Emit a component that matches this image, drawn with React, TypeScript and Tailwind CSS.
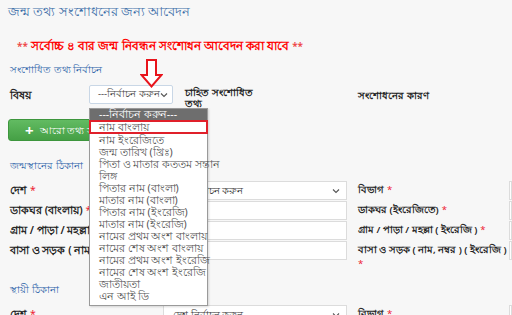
import React from "react";

const items = [
  "নাম বাংলায়",
  "নাম ইংরেজিতে",
  "জন্ম তারিখ (খ্রিঃ)",
  "পিতা ও মাতার কততম সন্তান",
  "লিঙ্গ",
  "পিতার নাম (বাংলা)",
  "মাতার নাম (বাংলা)",
  "পিতার নাম (ইংরেজি)",
  "মাতার নাম (ইংরেজি)",
  "নামের প্রথম অংশ বাংলায়",
  "নামের শেষ অংশ বাংলায়",
  "নামের প্রথম অংশ ইংরেজি",
  "নামের শেষ অংশ ইংরেজি",
  "জাতীয়তা",
  "এন আই ডি",
];

function Chevron() {
  return (
    <svg width="8" height="6" viewBox="0 0 8 6" className="shrink-0">
      <path d="M1 1.5 L4 4.5 L7 1.5" fill="none" stroke="#555" strokeWidth="1.1" />
    </svg>
  );
}

function Star() {
  return <span className="text-[#e23] ml-[3px] font-normal">*</span>;
}

function Row({
  left,
  right,
  leftInput,
}: {
  left: React.ReactNode;
  right: React.ReactNode;
  leftInput?: React.ReactNode;
}) {
  return (
    <div className="flex items-start h-[20px]">
      <div className="w-[163px] shrink-0 pl-[10px] pt-[2px] text-[10.5px] font-semibold text-[#222] leading-[14px] whitespace-nowrap">
        {left}
      </div>
      <div className="w-[184px] shrink-0 h-[19px] bg-white border border-[#dcdcdc] flex items-center pl-[9px] pr-[6px] text-[10px] text-[#333] whitespace-nowrap">
        {leftInput}
      </div>
      <div className="w-[162px] shrink-0 pl-[11px] pt-[2px] text-[9.6px] font-semibold text-[#222] leading-[14px] whitespace-nowrap">
        {right}
      </div>
      <div className="flex-1 h-[19px] bg-white border border-[#dcdcdc]" />
    </div>
  );
}

export default function App() {
  return (
    <div
      className="relative w-[512px] h-[315px] overflow-hidden bg-[#f7f7f7]"
      style={{ fontFamily: "'Noto Sans', 'DejaVu Sans', sans-serif" }}
    >
      <div className="pl-[8px] pt-[3px] text-[12.5px] text-[#3b6ea8] leading-[18px] whitespace-nowrap">জন্ম তথ্য সংশোধনের জন্য আবেদন</div>

      <div className="pl-[17px] pt-[16px] text-[12px] font-semibold text-[#ff0000] leading-[18px] whitespace-nowrap">
        <span className="text-[#e44] text-[10px]">**</span> সর্বোচ্চ ৪ বার জন্ম নিবন্ধন সংশোধন আবেদন করা যাবে{" "}
        <span className="text-[#e44] text-[10px]">**</span>
      </div>

      <div className="pl-[10px] pt-[7px] text-[10px] text-[#2a62a8] leading-[14px] whitespace-nowrap">সংশোধিত তথ্য নির্বাচন</div>

      {/* subject row */}
      <div className="flex items-start mt-[9px]">
        <div className="w-[89px] shrink-0 pl-[10px] pt-[3px] text-[10.5px] font-semibold text-[#222] leading-[14px]">বিষয়</div>
        <div className="w-[84px] h-[19px] shrink-0 bg-white border border-[#c9d7e6] rounded-[2px] flex items-center justify-between pl-[8px] pr-[6px] text-[9.5px] text-[#444] whitespace-nowrap">
          <span>---নির্বাচন করুন</span>
          <Chevron />
        </div>
        <div className="w-[185px] shrink-0 pl-[12px] pt-[2px] text-[10px] font-semibold text-[#222] leading-[11px] whitespace-nowrap">
          চাহিত সংশোধিত
          <br />
          তথ্য
        </div>
        <div className="pt-[3px] text-[10px] font-semibold text-[#222] leading-[14px] whitespace-nowrap">সংশোধনের কারণ</div>
      </div>

      {/* add button */}
      <div className="pl-[8px] mt-[10px]">
        <div className="w-[130px] h-[22px] rounded-[3px] bg-gradient-to-b from-[#62bb62] to-[#45a045] border border-[#3d963d] flex items-center pl-[16px] text-[10px] text-white gap-[6px] whitespace-nowrap">
          <span className="text-[15px] font-bold leading-none">+</span>
          <span>আরো তথ্য সংযোজন করুন</span>
        </div>
      </div>

      <div className="pl-[10px] pt-[17px] text-[10px] text-[#2a62a8] leading-[14px] whitespace-nowrap">জন্মস্থানের ঠিকানা</div>

      <div className="mt-[9px] flex flex-col">
        <Row
          left={<>দেশ<Star /></>}
          right={<>বিভাগ<Star /></>}
          leftInput={
            <div className="flex w-full items-center justify-between">
              <span>দেশ নির্বাচন করুন</span>
              <Chevron />
            </div>
          }
        />
        <Row left={<>ডাকঘর (বাংলায়)<Star /></>} right={<>ডাকঘর (ইংরেজিতে)<Star /></>} />
        <Row left={<>গ্রাম / পাড়া / মহল্লা<Star /></>} right={<>গ্রাম / পাড়া / মহল্লা ( ইংরেজি )<Star /></>} />
        <Row
          left={<>বাসা ও সড়ক ( নাম, নম্বর )</>}
          right={
            <>
              বাসা ও সড়ক ( নাম, নম্বর ) ( ইংরেজি )
              <br />
              <span className="text-[#e23] font-normal">*</span>
            </>
          }
        />
      </div>

      <div className="pl-[10px] pt-[21px] text-[10px] text-[#2a62a8] leading-[14px] whitespace-nowrap">স্থায়ী ঠিকানা</div>

      <div className="mt-[9px]">
        <Row
          left={<>দেশ<Star /></>}
          right={<>বিভাগ<Star /></>}
          leftInput={
            <div className="flex w-full items-center justify-between">
              <span>দেশ নির্বাচন করুন</span>
              <Chevron />
            </div>
          }
        />
      </div>

      {/* red arrow */}
      <svg className="absolute left-[140px] top-[59px]" width="23" height="29" viewBox="0 0 23 29">
        <path d="M7 1 H16 V16 H21.5 L11.5 27.5 L1.5 16 H7 Z" fill="#fff" stroke="#e8141c" strokeWidth="2" strokeLinejoin="miter" />
      </svg>

      {/* dropdown list */}
      <div className="absolute left-[89px] top-[108px] w-[119px] bg-white border border-[#9a9a9a] shadow-[1px_1px_2px_rgba(0,0,0,0.15)] text-[10.5px] leading-[12px] text-[#555]">
        <div className="bg-[#6e6e6e] text-white px-[9px] h-[11px] leading-[11px] whitespace-nowrap">---নির্বাচন করুন---</div>
        {items.map((t, i) => (
          <div
            key={t}
            className={
              i === 0
                ? "px-[8px] h-[14px] leading-[11px] border-2 border-[#e0202a] -mx-[1px] whitespace-nowrap"
                : "px-[9px] h-[12px] whitespace-nowrap"
            }
          >
            {t}
          </div>
        ))}
        <div className="h-[3px]" />
      </div>
    </div>
  );
}
